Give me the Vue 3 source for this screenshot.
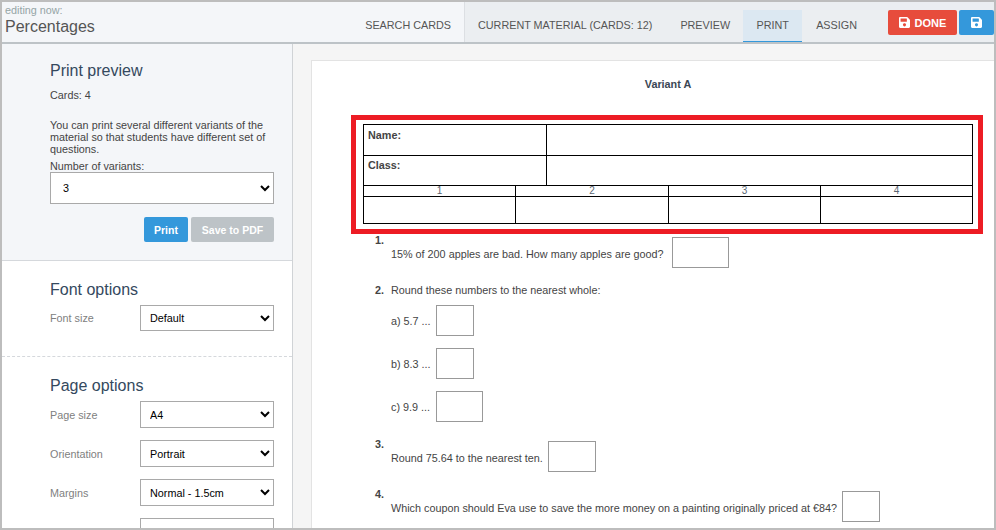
<script setup>
const tabs = [
  { label: 'CURRENT MATERIAL (CARDS: 12)' },
  { label: 'PREVIEW' },
  { label: 'PRINT', active: true },
  { label: 'ASSIGN' },
]
const scores = [1, 2, 3, 4]
const rounds = [
  { label: 'a) 5.7 ...', cls: 'ans-s' },
  { label: 'b) 8.3 ...', cls: 'ans-s' },
  { label: 'c) 9.9 ...', cls: 'ans-m' },
]
const pageRows = [
  { label: 'Page size', value: 'A4' },
  { label: 'Orientation', value: 'Portrait' },
  { label: 'Margins', value: 'Normal - 1.5cm' },
  { label: 'Colors', value: 'Custom' },
]
const savePath = 'M433.9 129.9l-83.8-83.8A48 48 0 0 0 316.1 32H48C21.5 32 0 53.5 0 80v352c0 26.5 21.5 48 48 48h352c26.5 0 48-21.5 48-48V163.9a48 48 0 0 0-14.1-34zM224 416c-35.3 0-64-28.7-64-64s28.7-64 64-64 64 28.7 64 64-28.7 64-64 64zm96-304.5V212c0 6.6-5.4 12-12 12H76c-6.6 0-12-5.4-12-12V108c0-6.6 5.4-12 12-12h228.5c3.2 0 6.2 1.3 8.5 3.5l3.5 3.5a12 12 0 0 1 3.5 8.5z'
</script>

<template>
  <div class="frame">
    <header class="top">
      <div class="title">
        <div class="editing">editing now:</div>
        <div class="name">Percentages</div>
      </div>
      <div class="tab search">SEARCH CARDS</div>
      <nav class="nav">
        <div v-for="t in tabs" :key="t.label" class="tab" :class="{ active: t.active }">{{ t.label }}</div>
        <button class="btn-done">
          <svg class="ico" viewBox="0 0 448 512"><path :d="savePath" fill="currentColor" /></svg>
          DONE
        </button>
        <button class="btn-save">
          <svg class="ico" viewBox="0 0 448 512"><path :d="savePath" fill="currentColor" /></svg>
        </button>
      </nav>
    </header>

    <div class="body">
      <aside class="side">
        <section class="panel-print">
          <h2>Print preview</h2>
          <p class="cards">Cards: 4</p>
          <p class="info">You can print several different variants of the material so that students have different set of questions.</p>
          <label class="nv-label">Number of variants:</label>
          <select class="sel sel-big"><option>3</option></select>
          <div class="actions">
            <button class="b-print">Print</button>
            <button class="b-pdf">Save to PDF</button>
          </div>
        </section>
        <section class="panel-font">
          <h2>Font options</h2>
          <div class="row">
            <span class="lab">Font size</span>
            <select class="sel"><option>Default</option></select>
          </div>
        </section>
        <section class="panel-page">
          <h2>Page options</h2>
          <div v-for="r in pageRows" :key="r.label" class="row">
            <span class="lab">{{ r.label }}</span>
            <select class="sel"><option>{{ r.value }}</option></select>
          </div>
        </section>
      </aside>

      <main class="main">
        <div class="paper">
          <div class="variant">Variant A</div>
          <div class="tbl">
            <div class="tr tr-name"><div class="c-l"><b>Name:</b></div><div class="c-r"></div></div>
            <div class="tr tr-class"><div class="c-l"><b>Class:</b></div><div class="c-r"></div></div>
            <div class="tr tr-nums"><div v-for="s in scores" :key="s" class="cell">{{ s }}</div></div>
            <div class="tr tr-empty"><div v-for="s in scores" :key="s" class="cell"></div></div>
          </div>
          <div class="highlight"></div>

          <div class="q q1">
            <b class="num">1.</b>
            <div class="line">15% of 200 apples are bad. How many apples are good?<span class="ans ans-l"></span></div>
          </div>
          <div class="q q2">
            <div class="head"><b>2.</b><span>Round these numbers to the nearest whole:</span></div>
            <div v-for="r in rounds" :key="r.label" class="sub">{{ r.label }}<span class="ans" :class="r.cls"></span></div>
          </div>
          <div class="q q3">
            <b class="num">3.</b>
            <div class="line">Round 75.64 to the nearest ten.<span class="ans ans-x"></span></div>
          </div>
          <div class="q q4">
            <b class="num">4.</b>
            <div class="line">Which coupon should Eva use to save the more money on a painting originally priced at €84?<span class="ans ans-s"></span></div>
          </div>
        </div>
      </main>
    </div>
  </div>
</template>

<style>
html, body { margin: 0; padding: 0; background: #fff; }
</style>

<style scoped>
* { box-sizing: border-box; }
.frame {
  width: 996px; height: 530px; border: 2px solid #bdbdbd; overflow: hidden;
  display: flex; flex-direction: column;
  font-family: "Liberation Sans", Arial, sans-serif; font-size: 10.8px; color: #444;
}
.top { height: 42px; flex: none; display: flex; background: #f4f6f9; border-bottom: 2px solid #bdc3c7; }
.title { flex: 1; padding: 1px 0 0 3px; }
.editing { font-size: 10.8px; line-height: 14px; color: #95a5a6; }
.name { font-size: 16px; line-height: 22px; color: #555; margin-top: -1px; }
.tab { font-size: 10.8px; color: #555; height: 40px; line-height: 46px; padding: 0 14px; white-space: nowrap; }
.search { padding-right: 13px; border-right: 1px solid #dcdfe3; }
.nav { width: 529px; flex: none; display: flex; background: #ebeef1; padding-top: 8px; }
.nav .tab { height: 32px; line-height: 31px; }
.nav .tab:first-child { margin-left: -1px; }
.nav .tab.active { background: #dce8f2; border-bottom: 1px solid #3498db; width: 59px; text-align: center; padding: 0; margin-left: -1px; }
.btn-done, .btn-save {
  border: 0; height: 25px; border-radius: 2px; color: #fff; font: bold 11px "Liberation Sans", Arial, sans-serif;
  display: flex; align-items: center; justify-content: center; padding: 0;
}
.btn-done { background: #e74c3c; width: 69px; margin-left: auto; gap: 5px; }
.btn-save { background: #3498db; width: 35px; margin-left: 2px; }
.ico { width: 11px; height: 13px; display: block; }

.body { flex: 1; display: flex; min-height: 0; }
.side { width: 291px; flex: none; border-right: 1px solid #d0d3d6; background: #fff; overflow: hidden; }
.side h2 { font-weight: 400; font-size: 16px; line-height: 20px; margin: 0; color: #34495e; }
.panel-print { background: #f4f6f9; padding: 17px 18px 18px 48px; height: 217px; border-bottom: 1px solid #d5d8dc; }
.cards { margin: 7px 0 0; line-height: 14px; }
.info { margin: 17px 0 0; line-height: 12px; }
.nv-label { display: block; line-height: 12px; margin-top: 5px; }
.sel {
  flex: none; display: block; width: 134px; height: 27px; background: #fff; border: 1px solid #a9a9a9; border-radius: 0;
  font: 10.8px "Liberation Sans", Arial, sans-serif; color: #000; padding: 0 5px;
}
.sel-big { width: 224px; height: 32px; padding-left: 8px; }
.actions { display: flex; justify-content: flex-end; gap: 3px; margin-top: 13px; }
.actions button { border: 0; height: 25px; border-radius: 2px; color: #fff; font: bold 10.5px "Liberation Sans", Arial, sans-serif; padding: 0; }
.b-print { width: 44px; background: #3498db; }
.b-pdf { width: 83px; background: #bdc3c7; }
.panel-font { padding: 19px 18px 0 48px; height: 96px; border-bottom: 1px dashed #d5d8dc; }
.panel-page { padding: 19px 18px 0 48px; }
.row { display: flex; justify-content: space-between; align-items: center; margin-bottom: 12px; }
.panel-font .row { margin-top: 5px; }
.panel-font .sel { height: 26px; }
.panel-page h2 { margin-bottom: 5px; }
.lab { color: #808080; }

.main { flex: 1; min-width: 0; background: #f5f5f5; padding: 16px 0 0 18px; overflow: hidden; }
.paper { position: relative; background: #fff; border: 1px solid #e3e3e3; border-right: 0; height: 600px; }
.variant { width: 610px; margin-left: 51px; text-align: center; font-weight: 700; line-height: 14px; padding-top: 16px; height: 63px; color: #3a4654; }
.tbl { margin-left: 51px; width: 610px; border: 1px solid #000; }
.tr { display: flex; }
.tr-name { height: 31px; border-bottom: 1px solid #000; }
.tr-class { height: 30px; border-bottom: 1px solid #000; }
.c-l { width: 183px; border-right: 1px solid #000; padding: 4px; line-height: 13px; }
.tr-class .c-l { padding-top: 3px; }
.c-r { flex: 1; }
.tr-nums { height: 11px; border-bottom: 1px solid #000; }
.tr-empty { height: 26px; }
.tr-nums, .tr-empty { display: grid; grid-template-columns: 152px 153px 152px 1fr; }
.cell { border-right: 1px solid #000; text-align: center; font-size: 10px; line-height: 10px; color: #5a6672; }
.cell:last-child { border-right: 0; }
.highlight { position: absolute; left: 39px; top: 54px; width: 632px; height: 119px; border: 5px solid #ed1c24; pointer-events: none; }

.q { margin-left: 63px; line-height: 14px; }
.num { display: block; }
.line { padding-left: 16px; display: flex; align-items: flex-start; white-space: nowrap; }
.ans { display: inline-block; border: 1px solid #999; height: 31px; flex: none; background: #fff; }
.ans-l { width: 57px; margin-left: 8px; margin-top: -10px; }
.ans-s { width: 38px; }
.ans-m { width: 47px; margin-left: 1px; }
.ans-x { width: 48px; margin-left: 5px; margin-top: -10px; }
.q1 { margin-top: 9px; height: 50px; }
.q2 { height: 154px; }
.q2 .head { display: flex; gap: 7px; }
.sub { display: flex; align-items: center; padding-left: 16px; height: 31px; margin-top: 12px; gap: 5px; }
.q2 .head + .sub { margin-top: 8px; }
.q3 { height: 50px; }
.q4 .ans-s { margin-left: 5px; margin-top: -10px; }
</style>
